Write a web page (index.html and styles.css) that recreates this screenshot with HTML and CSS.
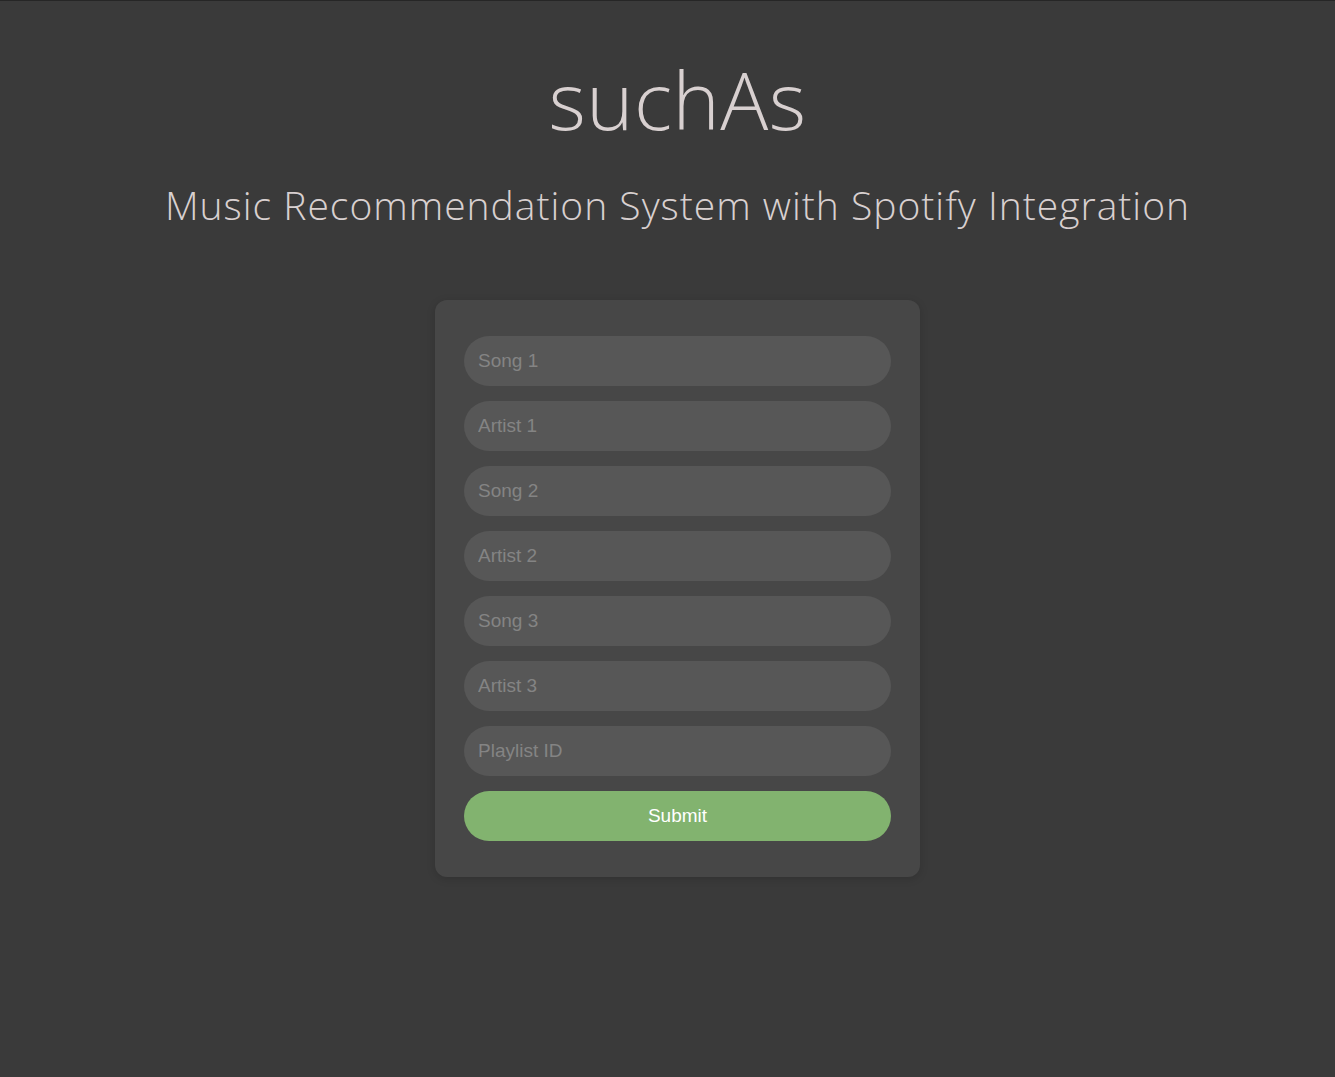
FILE: index.html
```html
<!DOCTYPE html>
<html lang="en">
<head>
<meta charset="utf-8">
<title>suchAs</title>
<link rel="stylesheet" href="styles.css">
</head>
<body>
<div class="page">
  <header class="hero">
    <h1 class="title">suchAs</h1>
    <h2 class="subtitle">Music Recommendation System with Spotify Integration</h2>
  </header>
  <form class="card">
    <input class="field" type="text" placeholder="Song 1">
    <input class="field" type="text" placeholder="Artist 1">
    <input class="field" type="text" placeholder="Song 2">
    <input class="field" type="text" placeholder="Artist 2">
    <input class="field" type="text" placeholder="Song 3">
    <input class="field" type="text" placeholder="Artist 3">
    <input class="field" type="text" placeholder="Playlist ID">
    <button class="submit" type="button">Submit</button>
  </form>
</div>
</body>
</html>
```
FILE: styles.css
```css
html, body {
  margin: 0;
  padding: 0;
  background: #3a3a3a;
}
.page {
  min-height: 1077px;
  box-sizing: border-box;
  border-top: 1px solid #262626;
  padding-left: 20px;
  display: flex;
  flex-direction: column;
  align-items: center;
}
.hero {
  text-align: center;
  color: #d8d0d0;
  font-family: "Open Sans", sans-serif;
  font-weight: 300;
}
.title {
  margin: 58px 0 0;
  font-size: 80px;
  font-weight: 300;
  line-height: 1;
  letter-spacing: 0.5px;
}
.subtitle {
  margin: 46px 0 0;
  font-size: 39px;
  font-weight: 300;
  line-height: 1;
  letter-spacing: 1px;
  white-space: nowrap;
}
.card {
  margin-top: 76px;
  width: 485px;
  box-sizing: border-box;
  padding: 36px 29px;
  background: #474747;
  border-radius: 12px;
  box-shadow: 0 2px 8px rgba(0,0,0,0.15);
  display: flex;
  flex-direction: column;
  gap: 15px;
}
.field {
  height: 50px;
  box-sizing: border-box;
  border: none;
  outline: none;
  border-radius: 25px;
  background: #575757;
  padding: 0 14px;
  font-family: "Liberation Sans", Arial, sans-serif;
  font-size: 19px;
  color: #ddd;
}
.field::placeholder {
  color: #848484;
}
.submit {
  height: 50px;
  border: none;
  border-radius: 25px;
  background: #82b36f;
  color: #ffffff;
  font-family: "Liberation Sans", Arial, sans-serif;
  font-size: 19px;
  cursor: pointer;
}
```
